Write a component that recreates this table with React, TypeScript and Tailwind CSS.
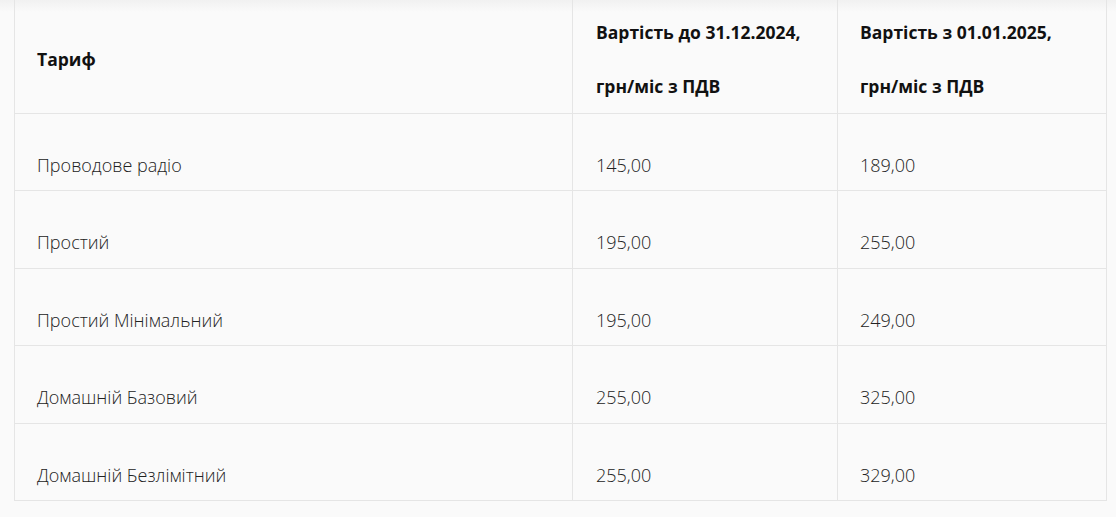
import React from "react";

const rows: [string, string, string][] = [
  ["Проводове радіо", "145,00", "189,00"],
  ["Простий", "195,00", "255,00"],
  ["Простий Мінімальний", "195,00", "249,00"],
  ["Домашній Базовий", "255,00", "325,00"],
  ["Домашній Безлімітний", "255,00", "329,00"],
];

export default function App() {
  return (
    <div
      className="w-[1116px] h-[517px] overflow-hidden bg-[linear-gradient(to_bottom,#f1f1f1,#fafafa_12px)] pl-[14px]"
      style={{ fontFamily: '"Open Sans", "Noto Sans", sans-serif' }}
    >
      <table className="border-collapse w-[1092px] table-fixed">
        <colgroup>
          <col className="w-[558px]" />
          <col className="w-[265px]" />
          <col className="w-[269px]" />
        </colgroup>
        <thead>
          <tr>
            <th className="border-x border-b border-[#e5e5e5] text-left align-middle px-[22px] pt-[6px] pb-0 h-[113px] text-[17.5px] font-bold text-[#111]">
              Тариф
            </th>
            <th className="border-x border-b border-[#e5e5e5] text-left align-top px-[23px] pt-[5px] pb-0 text-[17.5px] font-bold text-[#111] leading-[54px]">
              Вартість до 31.12.2024,
              <br />
              грн/міс з ПДВ
            </th>
            <th className="border-x border-b border-[#e5e5e5] text-left align-top px-[22px] pt-[5px] pb-0 text-[17.5px] font-bold text-[#111] leading-[54px]">
              Вартість з 01.01.2025,
              <br />
              грн/міс з ПДВ
            </th>
          </tr>
        </thead>
        <tbody>
          {rows.map((r) => (
            <tr key={r[0]}>
              <td className="border border-[#e5e5e5] px-[22px] pt-[39px] pb-[13.4px] text-[18px] font-light leading-6 text-[#222] align-top">
                {r[0]}
              </td>
              <td className="border border-[#e5e5e5] px-[23px] pt-[39px] pb-[13.4px] text-[18px] font-light leading-6 text-[#222] align-top">
                {r[1]}
              </td>
              <td className="border border-[#e5e5e5] px-[22px] pt-[39px] pb-[13.4px] text-[18px] font-light leading-6 text-[#222] align-top">
                {r[2]}
              </td>
            </tr>
          ))}
        </tbody>
      </table>
    </div>
  );
}
